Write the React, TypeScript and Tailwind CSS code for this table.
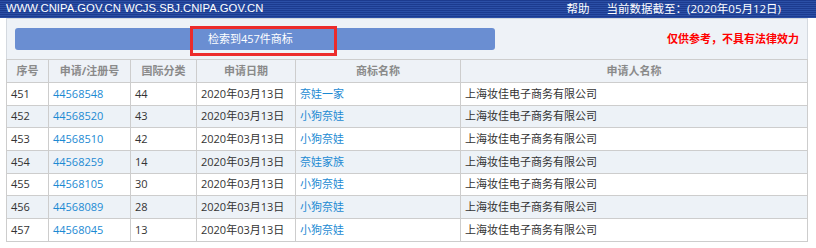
import React from 'react';

interface Row {
    no: number;
    regNo: string;
    cls: string;
    date: string;
    mark: string;
    applicant: string;
}

const rows: Row[] = [
    { no: 451, regNo: '44568548', cls: '44', date: '2020年03月13日', mark: '奈娃一家', applicant: '上海妆佳电子商务有限公司' },
    { no: 452, regNo: '44568520', cls: '43', date: '2020年03月13日', mark: '小狗奈娃', applicant: '上海妆佳电子商务有限公司' },
    { no: 453, regNo: '44568510', cls: '42', date: '2020年03月13日', mark: '小狗奈娃', applicant: '上海妆佳电子商务有限公司' },
    { no: 454, regNo: '44568259', cls: '14', date: '2020年03月13日', mark: '奈娃家族', applicant: '上海妆佳电子商务有限公司' },
    { no: 455, regNo: '44568105', cls: '30', date: '2020年03月13日', mark: '小狗奈娃', applicant: '上海妆佳电子商务有限公司' },
    { no: 456, regNo: '44568089', cls: '28', date: '2020年03月13日', mark: '小狗奈娃', applicant: '上海妆佳电子商务有限公司' },
    { no: 457, regNo: '44568045', cls: '13', date: '2020年03月13日', mark: '小狗奈娃', applicant: '上海妆佳电子商务有限公司' },
];

const headers = [
    { label: '序号', w: 'w-[42px]' },
    { label: '申请/注册号', w: 'w-[82px]' },
    { label: '国际分类', w: 'w-[66px]' },
    { label: '申请日期', w: 'w-[99px]' },
    { label: '商标名称', w: 'w-[165px]' },
    { label: '申请人名称', w: 'w-[347px]' },
];

const TopBar: React.FC = () => (
    <div className="h-[18px] flex items-center justify-between pl-[6px] pr-[35px] text-white bg-[repeating-linear-gradient(180deg,#1c3b8f_0px,#1c3b8f_1px,#2b4fa6_1px,#2b4fa6_2px)]">
        <span className="text-[11.3px] font-['Liberation_Sans',sans-serif] leading-none">WWW.CNIPA.GOV.CN WCJS.SBJ.CNIPA.GOV.CN</span>
        <div className="flex items-center gap-[17px] text-[11.5px] leading-none">
            <span>帮助</span>
            <span>当前数据截至：(2020年05月12日)</span>
        </div>
    </div>
);

const App: React.FC = () => {
    return (
        <div className="w-[816px] h-[248px] bg-white overflow-hidden font-['Open_Sans','Noto_Sans_CJK_SC',sans-serif] text-[11px] text-[#333]">
            <TopBar />
            <div className="ml-[6px] w-[802px]">
                <div className="border border-b-0 border-[#d4d9df] bg-[#eef2f7] px-[8px] py-[9px] flex items-center justify-between">
                    <div className="relative w-[480px] h-[22px] rounded-[3px] bg-[#6a8ed2] flex items-center text-white">
                        <span className="pl-[193px]">检索到457件商标</span>
                        <div className="absolute left-[175px] -top-[2px] w-[147px] h-[30px] border-[3px] border-[#ec2b2b]"></div>
                    </div>
                    <span className="text-[#ff0000] font-bold">仅供参考，不具有法律效力</span>
                </div>
                <table className="w-[802px] table-fixed border-collapse">
                    <thead>
                        <tr className="h-[23px] bg-[#eef2f7]">
                            {headers.map((h) => (
                                <th key={h.label} className={`${h.w} border border-[#cdcdcd] text-center font-bold text-[#8a8a8a] p-0`}>
                                    {h.label}
                                </th>
                            ))}
                        </tr>
                    </thead>
                    <tbody>
                        {rows.map((r, i) => (
                            <tr key={r.no} className={`h-[22.7px] ${i % 2 === 1 ? 'bg-[#edf2f7]' : 'bg-white'}`}>
                                <td className="border border-[#cdcdcd] pl-[4px] py-0">{r.no}</td>
                                <td className="border border-[#cdcdcd] pl-[4px] py-0 text-[#1c8ad3]">{r.regNo}</td>
                                <td className="border border-[#cdcdcd] pl-[4px] py-0">{r.cls}</td>
                                <td className="border border-[#cdcdcd] pl-[4px] py-0">{r.date}</td>
                                <td className="border border-[#cdcdcd] pl-[4px] py-0 text-[#1c8ad3]">{r.mark}</td>
                                <td className="border border-[#cdcdcd] pl-[4px] py-0">{r.applicant}</td>
                            </tr>
                        ))}
                    </tbody>
                </table>
            </div>
        </div>
    );
};

export default App;
